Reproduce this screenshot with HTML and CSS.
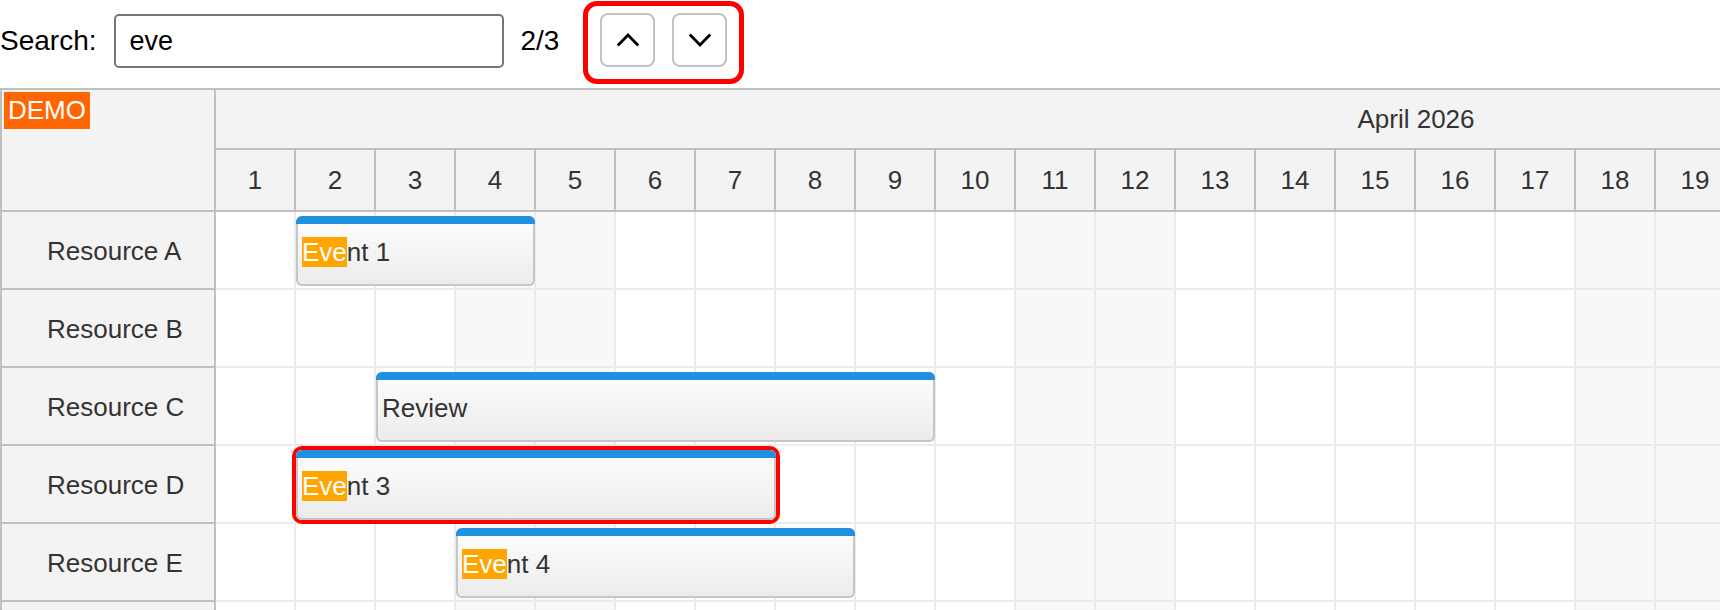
FILE: index.html
```html
<!DOCTYPE html>
<html lang="en">
<head>
<meta charset="utf-8">
<title>Scheduler search</title>
<link rel="stylesheet" href="styles.css">
</head>
<body>
<div class="toolbar">
  <label class="search-label" for="q">Search:</label>
  <input id="q" class="search-input" type="text" value="eve">
  <span class="search-count">2/3</span>
  <div class="nav-box">
    <button class="nav-btn" type="button" aria-label="Previous">
      <svg width="24" height="16" viewBox="0 0 24 16"><polyline points="1.8,13.5 12,3 22.2,13.5" fill="none" stroke="#000" stroke-width="2.7"/></svg>
    </button>
    <button class="nav-btn" type="button" aria-label="Next">
      <svg width="24" height="16" viewBox="0 0 24 16"><polyline points="1.8,2.5 12,13 22.2,2.5" fill="none" stroke="#000" stroke-width="2.7"/></svg>
    </button>
  </div>
</div>

<div class="scheduler">
  <div class="side">
    <div class="corner"><span class="demo">DEMO</span></div>
    <div class="rh">Resource A</div>
    <div class="rh">Resource B</div>
    <div class="rh">Resource C</div>
    <div class="rh">Resource D</div>
    <div class="rh">Resource E</div>
    <div class="rh"></div>
  </div>
  <div class="main">
    <div class="month-row"><div class="month">April 2026</div></div>
    <div class="day-row">
      <div class="day">1</div><div class="day">2</div><div class="day">3</div><div class="day">4</div><div class="day">5</div>
      <div class="day">6</div><div class="day">7</div><div class="day">8</div><div class="day">9</div><div class="day">10</div>
      <div class="day">11</div><div class="day">12</div><div class="day">13</div><div class="day">14</div><div class="day">15</div>
      <div class="day">16</div><div class="day">17</div><div class="day">18</div><div class="day">19</div><div class="day">20</div>
    </div>

    <div class="row">
      <div class="cell"></div><div class="cell"></div><div class="cell"></div><div class="cell we"></div><div class="cell we"></div>
      <div class="cell"></div><div class="cell"></div><div class="cell"></div><div class="cell"></div><div class="cell"></div>
      <div class="cell we"></div><div class="cell we"></div><div class="cell"></div><div class="cell"></div><div class="cell"></div>
      <div class="cell"></div><div class="cell"></div><div class="cell we"></div><div class="cell we"></div><div class="cell"></div>
      <div class="event" style="left:80px;width:239px"><span class="event-text"><span class="hl">Eve</span>nt 1</span></div>
    </div>

    <div class="row">
      <div class="cell"></div><div class="cell"></div><div class="cell"></div><div class="cell we"></div><div class="cell we"></div>
      <div class="cell"></div><div class="cell"></div><div class="cell"></div><div class="cell"></div><div class="cell"></div>
      <div class="cell we"></div><div class="cell we"></div><div class="cell"></div><div class="cell"></div><div class="cell"></div>
      <div class="cell"></div><div class="cell"></div><div class="cell we"></div><div class="cell we"></div><div class="cell"></div>
    </div>

    <div class="row">
      <div class="cell"></div><div class="cell"></div><div class="cell"></div><div class="cell we"></div><div class="cell we"></div>
      <div class="cell"></div><div class="cell"></div><div class="cell"></div><div class="cell"></div><div class="cell"></div>
      <div class="cell we"></div><div class="cell we"></div><div class="cell"></div><div class="cell"></div><div class="cell"></div>
      <div class="cell"></div><div class="cell"></div><div class="cell we"></div><div class="cell we"></div><div class="cell"></div>
      <div class="event" style="left:160px;width:559px"><span class="event-text">Review</span></div>
    </div>

    <div class="row">
      <div class="cell"></div><div class="cell"></div><div class="cell"></div><div class="cell we"></div><div class="cell we"></div>
      <div class="cell"></div><div class="cell"></div><div class="cell"></div><div class="cell"></div><div class="cell"></div>
      <div class="cell we"></div><div class="cell we"></div><div class="cell"></div><div class="cell"></div><div class="cell"></div>
      <div class="cell"></div><div class="cell"></div><div class="cell we"></div><div class="cell we"></div><div class="cell"></div>
      <div class="event selected" style="left:80px;width:480px"><span class="event-text"><span class="hl">Eve</span>nt 3</span></div>
    </div>

    <div class="row">
      <div class="cell"></div><div class="cell"></div><div class="cell"></div><div class="cell we"></div><div class="cell we"></div>
      <div class="cell"></div><div class="cell"></div><div class="cell"></div><div class="cell"></div><div class="cell"></div>
      <div class="cell we"></div><div class="cell we"></div><div class="cell"></div><div class="cell"></div><div class="cell"></div>
      <div class="cell"></div><div class="cell"></div><div class="cell we"></div><div class="cell we"></div><div class="cell"></div>
      <div class="event" style="left:240px;width:399px"><span class="event-text"><span class="hl">Eve</span>nt 4</span></div>
    </div>

    <div class="row">
      <div class="cell"></div><div class="cell"></div><div class="cell"></div><div class="cell we"></div><div class="cell we"></div>
      <div class="cell"></div><div class="cell"></div><div class="cell"></div><div class="cell"></div><div class="cell"></div>
      <div class="cell we"></div><div class="cell we"></div><div class="cell"></div><div class="cell"></div><div class="cell"></div>
      <div class="cell"></div><div class="cell"></div><div class="cell we"></div><div class="cell we"></div><div class="cell"></div>
    </div>
  </div>
</div>
</body>
</html>
```

FILE: styles.css
```css
html, body {
  margin: 0;
  padding: 0;
  overflow: hidden;
  background: #fff;
}

body {
  font-family: "Liberation Sans", Arial, sans-serif;
  color: #000;
}

/* ---------- toolbar ---------- */
.toolbar {
  display: flex;
  align-items: center;
  height: 82px;
  margin-bottom: 6px;
  gap: 17px;
  font-size: 28px;
}

.search-input {
  box-sizing: border-box;
  width: 390px;
  height: 54px;
  border: 2px solid #767676;
  border-radius: 5px;
  padding: 0 14px;
  font-family: "Liberation Sans", Arial, sans-serif;
  font-size: 27px;
  color: #000;
  background: #fff;
  outline: none;
}

.nav-box {
  align-self: flex-start;
  margin-top: 1px;
  margin-left: 7px;
  display: flex;
  gap: 17px;
  box-sizing: border-box;
  height: 83px;
  padding: 7px 12px 12px 12px;
  border: 5px solid #ff0000;
  border-radius: 14px;
}

.nav-btn {
  box-sizing: border-box;
  width: 55px;
  height: 54px;
  display: flex;
  align-items: center;
  justify-content: center;
  padding: 0;
  background: #fff;
  border: 2px solid #c2c2c2;
  border-radius: 8px;
}

/* ---------- scheduler ---------- */
.scheduler {
  display: flex;
  border-top: 2px solid #c0c0c0;
  border-left: 2px solid #c0c0c0;
  overflow: hidden;
  font-size: 26px;
  color: #333;
}

.side {
  flex: none;
  width: 214px;
  box-sizing: border-box;
  border-right: 2px solid #c0c0c0;
  background: #f3f3f3;
}

.corner {
  position: relative;
  box-sizing: border-box;
  height: 122px;
  border-bottom: 2px solid #c0c0c0;
}

.demo {
  position: absolute;
  top: 2px;
  left: 2px;
  background: #ff6600;
  color: #fff;
  padding: 4px 4px;
  line-height: 29px;
}

.rh {
  box-sizing: border-box;
  height: 78px;
  border-bottom: 2px solid #c0c0c0;
  display: flex;
  align-items: center;
  padding-left: 45px;
  padding-top: 2px;
}

.main {
  flex: none;
  width: 2400px;
}

.month-row {
  box-sizing: border-box;
  height: 60px;
  border-bottom: 2px solid #c0c0c0;
  background: #f3f3f3;
}

.month {
  width: 2400px;
  line-height: 58px;
  text-align: center;
}

.day-row {
  display: flex;
  box-sizing: border-box;
  height: 62px;
  border-bottom: 2px solid #c0c0c0;
  background: #f3f3f3;
}

.day {
  flex: none;
  box-sizing: border-box;
  width: 80px;
  border-right: 2px solid #c0c0c0;
  display: flex;
  align-items: center;
  justify-content: center;
}

.row {
  position: relative;
  display: flex;
  box-sizing: border-box;
  height: 78px;
  border-bottom: 2px solid #ebebeb;
}

.cell {
  flex: none;
  box-sizing: border-box;
  width: 80px;
  border-right: 2px solid #ebebeb;
  background: #fff;
}

.cell.we {
  background: #f8f8f8;
}

.event {
  position: absolute;
  top: 4px;
  height: 70px;
  box-sizing: border-box;
  display: flex;
  align-items: center;
  padding-left: 6px;
  padding-top: 2px;
  border-radius: 6px;
  overflow: hidden;
  background: linear-gradient(to bottom, #fefefe, #ebebeb);
  box-shadow: inset 0 0 0 2px #c6c6c6;
  color: #333;
}

.event::before {
  content: "";
  position: absolute;
  top: 0;
  left: 0;
  right: 0;
  height: 8px;
  background: #2290e2;
}

.event.selected {
  box-shadow: inset 0 0 0 2px #c6c6c6, 0 0 0 4px #ff0000;
  overflow: visible;
}

.event.selected::before {
  border-radius: 6px 6px 0 0;
}

.event-text {
  white-space: nowrap;
}

.hl {
  background: #ffa500;
  color: #fff;
}
```
